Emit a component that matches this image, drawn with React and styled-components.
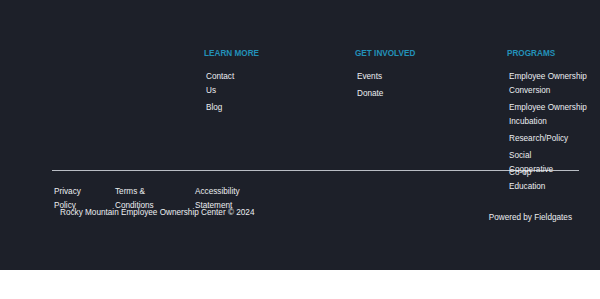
import React from "react";
import styled, { createGlobalStyle } from "styled-components";

const GlobalStyle = createGlobalStyle`
  body {
    margin: 0;
    background: #fff;
    font-family: "Liberation Sans", Arial, sans-serif;
  }
`;

const StyledFooter = styled.footer`
  box-sizing: border-box;
  height: 270px;
  padding: 49px 21px 0 52px;
  background: #1d2029;
  overflow: hidden;
`;

const Columns = styled.div`
  display: grid;
  grid-template-columns: 152px 151px 152px 1fr;
  height: 121px;
`;

const Heading = styled.h3`
  margin: 0 0 11px;
  font-size: 8.2px;
  line-height: 10px;
  font-weight: 700;
  text-transform: uppercase;
  color: #2391b9;
`;

const LinkList = styled.ul`
  list-style: none;
  margin: 0;
  padding: 0 0 0 2px;
`;

const LinkItem = styled.li`
  width: ${(p) => p.$width || "80px"};
  height: ${(p) => (p.$clip ? "14px" : "auto")};
  margin-bottom: 3px;
  font-size: 8.2px;
  line-height: 14px;
  color: #eceef1;
`;

const Rule = styled.div`
  height: 1px;
  background: #b9bdc4;
`;

const LegalNav = styled.nav`
  display: grid;
  grid-template-columns: 61px 80px auto;
  height: 21px;
  margin-top: 14px;
  padding-left: 2px;
`;

const LegalLink = styled.span`
  max-width: 48px;
  font-size: 8.2px;
  line-height: 14px;
  color: #eceef1;
`;

const BottomRow = styled.div`
  display: flex;
  justify-content: space-between;
  align-items: flex-start;
  padding: 0 7px 0 8px;
  font-size: 8.2px;
  line-height: 14px;
  color: #eceef1;
`;

const Powered = styled.span`
  margin-top: 5px;
`;

const columns = [
  {
    title: "Learn More",
    links: [
      { label: "Contact Us", width: "36px" },
      { label: "Blog", width: "36px" },
    ],
  },
  {
    title: "Get Involved",
    links: [{ label: "Events" }, { label: "Donate" }],
  },
  {
    title: "Programs",
    links: [
      { label: "Employee Ownership Conversion" },
      { label: "Employee Ownership Incubation" },
      { label: "Research/Policy" },
      { label: "Social Cooperative", width: "50px", clip: true },
      { label: "Co-op Education", width: "50px" },
    ],
  },
];

function FooterColumn({ title, links }) {
  return (
    <div>
      <Heading>{title}</Heading>
      <LinkList>
        {links.map((l) => (
          <LinkItem key={l.label} $width={l.width} $clip={l.clip}>
            {l.label}
          </LinkItem>
        ))}
      </LinkList>
    </div>
  );
}

export default function App() {
  return (
    <>
      <GlobalStyle />
      <StyledFooter>
        <Columns>
          <div />
          {columns.map((c) => (
            <FooterColumn key={c.title} {...c} />
          ))}
        </Columns>
        <Rule />
        <LegalNav>
          <LegalLink>Privacy Policy</LegalLink>
          <LegalLink>Terms &amp; Conditions</LegalLink>
          <LegalLink>Accessibility Statement</LegalLink>
        </LegalNav>
        <BottomRow>
          <span>Rocky Mountain Employee Ownership Center © 2024</span>
          <Powered>Powered by Fieldgates</Powered>
        </BottomRow>
      </StyledFooter>
    </>
  );
}
